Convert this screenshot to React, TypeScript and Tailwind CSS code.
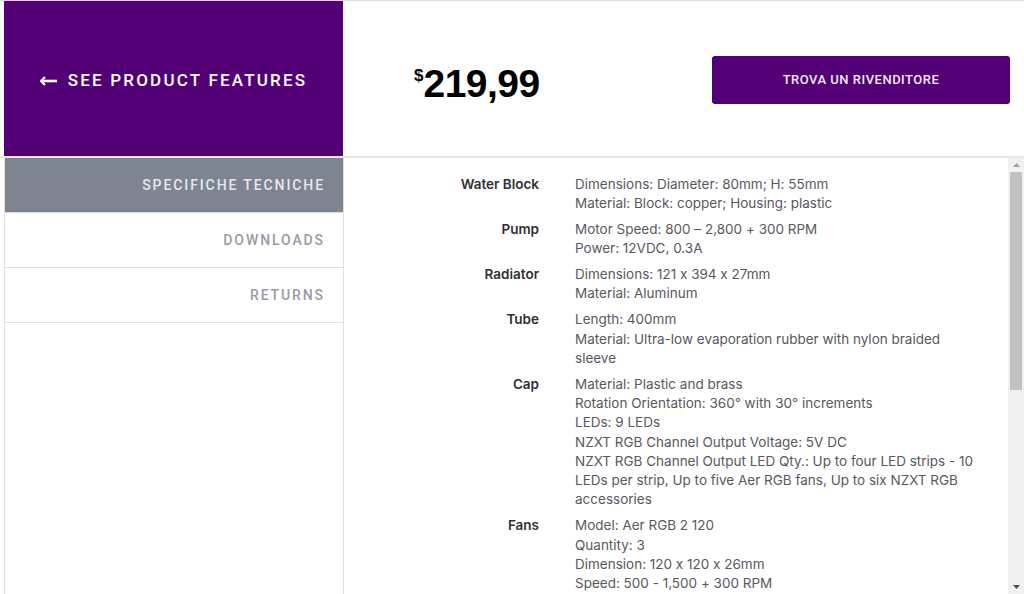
import React from "react";

type Spec = { label: string; lines: string[] };

const specs: Spec[] = [
  {
    label: "Water Block",
    lines: ["Dimensions: Diameter: 80mm; H: 55mm", "Material: Block: copper; Housing: plastic"],
  },
  { label: "Pump", lines: ["Motor Speed: 800 – 2,800 + 300 RPM", "Power: 12VDC, 0.3A"] },
  { label: "Radiator", lines: ["Dimensions: 121 x 394 x 27mm", "Material: Aluminum"] },
  {
    label: "Tube",
    lines: ["Length: 400mm", "Material: Ultra-low evaporation rubber with nylon braided sleeve"],
  },
  {
    label: "Cap",
    lines: [
      "Material: Plastic and brass",
      "Rotation Orientation: 360° with 30° increments",
      "LEDs: 9 LEDs",
      "NZXT RGB Channel Output Voltage: 5V DC",
      "NZXT RGB Channel Output LED Qty.: Up to four LED strips - 10 LEDs per strip, Up to five Aer RGB fans, Up to six NZXT RGB accessories",
    ],
  },
  {
    label: "Fans",
    lines: [
      "Model: Aer RGB 2 120",
      "Quantity: 3",
      "Dimension: 120 x 120 x 26mm",
      "Speed: 500 - 1,500 + 300 RPM",
    ],
  },
];

const tabs = ["SPECIFICHE TECNICHE", "DOWNLOADS", "RETURNS"];

function Scrollbar() {
  return (
    <div className="flex h-full w-[16px] flex-col items-center bg-[#f1f1f1]">
      <div className="flex h-[14px] w-full items-center justify-center">
        <svg width="7" height="4" viewBox="0 0 7 4">
          <path d="M0 4 L3.5 0 L7 4 Z" fill="#a3a3a3" />
        </svg>
      </div>
      <div className="h-[218px] w-[12px] bg-[#c1c1c1]" />
      <div className="flex-1" />
      <div className="flex h-[14px] w-full items-center justify-center">
        <svg width="7" height="4" viewBox="0 0 7 4">
          <path d="M0 0 L7 0 L3.5 4 Z" fill="#505050" />
        </svg>
      </div>
    </div>
  );
}

export default function App() {
  return (
    <div
      className="flex h-[594px] w-[1024px] flex-col overflow-hidden border-t border-[#dcdcdc] bg-white [font-feature-settings:'calt'_0]"
      style={{ fontFamily: "Inter, 'Liberation Sans', sans-serif" }}
    >
      {/* header strip */}
      <div className="flex h-[157px] shrink-0 border-b-2 border-[#e6e6e6]">
        <div
          className="ml-[4px] flex w-[339px] items-center justify-center gap-[10px] bg-[#530076] pt-[4px] text-white"
          style={{ fontFamily: "Roboto, sans-serif" }}
        >
          <svg width="18" height="10" viewBox="0 0 18 10">
            <path d="M5 1 L1 5 L5 9" fill="none" stroke="white" strokeWidth="2.2" />
            <path d="M1.5 5 H17" stroke="white" strokeWidth="2.6" />
          </svg>
          <span className="text-[17px] font-medium tracking-[2.2px]">SEE PRODUCT FEATURES</span>
        </div>
        <div className="flex flex-1 items-center">
          <div
            className="ml-[71px] mt-[10px] flex items-start text-black"
            style={{ fontFamily: "'Liberation Sans', Arial, sans-serif" }}
          >
            <span className="mt-[3px] text-[17px] font-bold leading-none">$</span>
            <span className="text-[39px] font-bold leading-none tracking-[-0.5px]">219,99</span>
          </div>
          <div
            className="ml-auto mr-[14px] mt-[2px] flex h-[48px] w-[298px] items-center justify-center rounded-[3px] bg-[#530076]"
            style={{ fontFamily: "Roboto, sans-serif" }}
          >
            <span className="text-[13px] font-medium tracking-[0.5px] text-[#f1e9f5]">
              TROVA UN RIVENDITORE
            </span>
          </div>
        </div>
      </div>

      {/* body */}
      <div className="flex min-h-0 flex-1">
        <div
          className="ml-[4px] w-[340px] shrink-0 border-x border-[#dedede]"
          style={{ fontFamily: "Roboto, sans-serif" }}
        >
          {tabs.map((t, i) => (
            <div
              key={t}
              className={
                i === 0
                  ? "flex h-[55px] items-center justify-end border-b border-[#d8d8d8] bg-[#7e8590] pr-[18px]"
                  : "flex h-[55px] items-center justify-end border-b border-[#e0e0e0] bg-white pr-[18px]"
              }
            >
              <span
                className={
                  i === 0
                    ? "text-[14px] font-medium tracking-[1.9px] text-[#e6e7ec]"
                    : "text-[14px] font-medium tracking-[1.9px] text-[#9a9ba6]"
                }
              >
                {t}
              </span>
            </div>
          ))}
        </div>

        <div className="flex min-w-0 flex-1">
          <div className="min-w-0 flex-1 overflow-hidden pt-[17px]">
            <div className="flex flex-col gap-[6.5px]">
              {specs.map((s) => (
                <div key={s.label} className="flex">
                  <div className="w-[195px] shrink-0 text-right text-[13.5px] font-semibold leading-[19.3px] text-[#2f2f35]">
                    {s.label}
                  </div>
                  <div className="ml-[36px] w-[402px] text-[13.5px] leading-[19.3px] text-[#585860]">
                    {s.lines.map((l) => (
                      <div key={l}>{l}</div>
                    ))}
                  </div>
                </div>
              ))}
            </div>
          </div>
          <Scrollbar />
        </div>
      </div>
    </div>
  );
}
